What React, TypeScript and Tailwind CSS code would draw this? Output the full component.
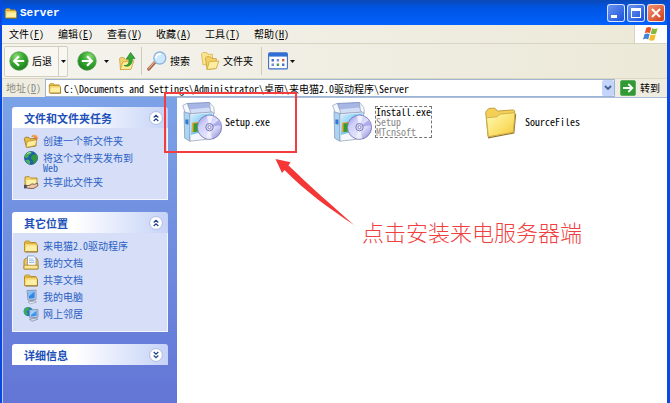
import type { ReactNode } from "react";

const menus = [
  { label: "文件", hotkey: "F" },
  { label: "编辑", hotkey: "E" },
  { label: "查看", hotkey: "V" },
  { label: "收藏", hotkey: "A" },
  { label: "工具", hotkey: "T" },
  { label: "帮助", hotkey: "H" },
];

function SmallFolder({ className = "size-4" }: { className?: string }) {
  return (
    <svg viewBox="0 0 16 16" className={className}>
      <path d="M1.5 4.5 2.6 3h3.8l1.2 1.5h5.2v2H1.5z" fill="#f2cf5a" stroke="#b48a24" strokeWidth=".9" />
      <path d="M1.5 13.6V5h11.4l1.2 1.2v7.4z" fill="#f5d468" stroke="#b48a24" strokeWidth=".9" />
      <path d="m2.4 12.8 1.2-5.4h10.8v5.8h-12z" fill="#fdf0a4" />
      <path d="M2.4 14h12V7.4" fill="none" stroke="#8d6a1c" strokeWidth=".9" />
    </svg>
  );
}

function NewFolder() {
  return (
    <svg viewBox="0 0 16 16" className="size-4">
      <path d="M1.2 5.5 3 4l3 .6 1 1.2 6-.4v7.6l-9.5 1.5z" fill="#e9bd43" stroke="#96701d" strokeWidth=".8" />
      <path d="m3.2 14.4 1-5.9 9.5-1.7-1.1 5.7z" fill="#fdee9c" stroke="#b98d2c" strokeWidth=".7" />
      <path d="M8.2 3.4c2-2.6 5.9-2 6.4.9.2 1.6-.3 2.8-1.4 3.7-.2-2.6-1.8-4.4-5-4.6z" fill="#e8782a" />
      <path d="M10 3.2c1.6-.9 3.3-.2 3.6 1.3" fill="none" stroke="#ffd277" strokeWidth="1" />
    </svg>
  );
}

function Globe() {
  return (
    <svg viewBox="0 0 16 16" className="size-4">
      <circle cx="8" cy="8" r="6.5" fill="#1f5dad" stroke="#1c4b88" strokeWidth=".7" />
      <path d="M2.4 4.5C4.5 1.6 7 1.4 9 1.8L8 4.2 5.8 5l-.5 2.4-2.6.7L1.5 7z" fill="#3fae49" />
      <path d="m8.5 5.8 3-1.5 2.6.7.3 3.4-2.2 4.5-1.6.8-.8-3.6-2-1.3z" fill="#2f9a3d" />
      <path d="m2.5 10 3-.4 2 2.4-.9 2.3A6.6 6.6 0 0 1 2.5 10z" fill="#47b952" />
      <path d="M4 4.3c1-1.4 2.4-1.8 3.5-1.7" fill="none" stroke="#d5f5e0" strokeWidth="1" />
    </svg>
  );
}

function ShareFolder() {
  return (
    <svg viewBox="0 0 16 16" className="size-4">
      <path d="M2 3 6 2.5 7.5 4H14v8H2z" fill="#f4d265" stroke="#a67a1d" strokeWidth=".8" />
      <path d="M3.4 6h9.8v5H3.4z" fill="#fdf0a8" />
      <path d="M3.2 11.5H6l3-1.6 2.5.4 3-1.1.4 2.6-4.1 2.6H5.8l-2.6-.8z" fill="#efc6a6" stroke="#5f4a36" strokeWidth=".8" />
      <path d="M1 10.8h2.6v3.6H1z" fill="#4b4f66" />
    </svg>
  );
}

function DocsFolder() {
  return (
    <svg viewBox="0 0 16 16" className="size-4">
      <path d="M1 5 3 3h10.5L15 6v8H1z" fill="#eec550" stroke="#a67a1d" strokeWidth=".8" />
      <path d="M4.500 1h6L13 3.400V11H4.500z" fill="#fff" stroke="#6f93c9" strokeWidth=".8" />
      <path d="M6 4h4.500M6 5.800h5.400M6 7.600h5.400" stroke="#79a8dd" strokeWidth=".8" />
      <path d="M1 10.200h14V14H1z" fill="#fbe892" stroke="#b0852a" strokeWidth=".8" />
    </svg>
  );
}

function Computer() {
  return (
    <svg viewBox="0 0 16 16" className="size-4">
      <path d="m4 1.500 9-.3v9.300l-8 .6z" fill="#d7deeb" stroke="#7484a5" strokeWidth=".8" />
      <path d="m5.200 2.700 6.500-.3v6.800l-5.800.5z" fill="#2f86e6" />
      <path d="m5.200 2.700 6.500-.3-6 5z" fill="#7fc1fa" />
      <path d="M7 11h4l.6 1.700H6.400z" fill="#8b99b4" />
      <path d="m5 13 6-1 2.500 1-6 1.800z" fill="#eef0f4" stroke="#8390a8" strokeWidth=".6" />
    </svg>
  );
}

function Network() {
  return (
    <svg viewBox="0 0 16 16" className="size-4">
      <circle cx="5.2" cy="5.600" r="4.600" fill="#2274c9" />
      <path d="M1.500 3.400C3 1.300 5 .9 6.800 1.400L5.300 4 3 5.500l1.500 2-.8 2.300A4.600 4.600 0 0 1 1.500 3.400z" fill="#3cb148" />
      <path d="m6.300 4 8.600-.4v7.600l-8 .8z" fill="#d7deeb" stroke="#7081a4" strokeWidth=".8" />
      <path d="m7.500 5 6.200-.3v5.400l-5.700.6z" fill="#3f94ec" />
      <path d="m7.500 5 6.200-.3-5.900 4.200z" fill="#9dd1fb" />
      <path d="m6.500 13.400 6-1.200 2.300 1-5.800 2z" fill="#e4e7ee" stroke="#74829e" strokeWidth=".7" />
    </svg>
  );
}

function ArrowBall({ flip = false, id }: { flip?: boolean; id: string }) {
  return (
    <svg viewBox="0 0 20 20" className={flip ? "size-5 -scale-x-100" : "size-5"}>
      <defs>
        <radialGradient id={id} cx=".35" cy=".25" r=".8">
          <stop offset="0" stopColor="#8ada73" />
          <stop offset=".5" stopColor="#37a932" />
          <stop offset="1" stopColor="#1b7d1c" />
        </radialGradient>
      </defs>
      <circle cx="10" cy="10" r="9.2" fill={`url(#${id})`} stroke="#4f9a4a" strokeWidth=".8" />
      <path d="M15.200 10H5.600M10 5.200 5.200 10l4.800 4.800" fill="none" stroke="#fff" strokeWidth="2.2" />
    </svg>
  );
}

function UpFolder() {
  return (
    <svg viewBox="0 0 18 20" className="h-5 w-[18px]">
      <path d="M1.500 7.500 3 6.300l3.300.6 1 1.600 6.200.8-1 8.700-10 .6z" fill="#f3d269" stroke="#c29c3c" strokeWidth=".7" />
      <path d="m2.300 18.600 2.600-7.800 11-1-3 8.600z" fill="#fdeb95" stroke="#c59b38" strokeWidth=".7" />
      <path d="M6 14.500c4 .4 5.300-2.200 5.200-6.500H8.300L12.600 1.500 17 7.600h-2.700c.2 5.600-3 9.200-8.300 6.900z" fill="#35a936" stroke="#1d7a22" strokeWidth=".7" />
    </svg>
  );
}

function Magnifier() {
  return (
    <svg viewBox="0 0 20 20" className="size-5">
      <path d="m1.800 18 6.400-7" stroke="#a0604a" strokeWidth="3.2" strokeLinecap="round" />
      <path d="m1.800 17.400 6-6.600" stroke="#e0a884" strokeWidth="1.3" strokeLinecap="round" />
      <circle cx="12.800" cy="7" r="6" fill="#cbe8fc" stroke="#8fb4de" strokeWidth="1.3" />
      <path d="M9 6.500c.3-2 2-3.600 4.400-3.500" fill="none" stroke="#fff" strokeWidth="1.800" strokeLinecap="round" />
    </svg>
  );
}

function Folders() {
  return (
    <svg viewBox="0 0 20 20" className="size-5">
      <path d="m1.500 3 1.400-1.600 4 .3 1 1.500 4.600.2v9.300L3 14z" fill="#fae48f" stroke="#d8b452" strokeWidth=".8" />
      <path d="m5.500 7 1.400-1.400 3.600.3 1.100 1.500 4.800.3-.6 9.800-8.800 1z" fill="#f3d062" stroke="#c99f3a" strokeWidth=".8" />
      <path d="m7 18.400 2.300-7.800 9.600-.6-2.600 7.500z" fill="#fdee9f" stroke="#cda33d" strokeWidth=".8" />
    </svg>
  );
}

function ViewsIcon() {
  return (
    <svg viewBox="0 0 20 18" className="h-[18px] w-5">
      <rect x=".6" y=".9" width="18.800" height="16" rx="1" fill="#fff" stroke="#3a6fc4" strokeWidth="1.1" />
      <path d="M1 1h18v3.600H1z" fill="#2f6fd6" />
      <path d="M3.500 7H6v2.400H3.500zM14 11.500h2.400V14H14z" fill="#4a6fd0" />
      <path d="M8.700 7h2.400v2.400H8.700zM3.500 11.500H6V14H3.500z" fill="#7f8bd0" />
      <path d="M14 7h2.400v2.400H14z" fill="#d0574a" />
      <path d="M8.700 11.500h2.400V14H8.700z" fill="#45a24f" />
    </svg>
  );
}

function WindowsFlag() {
  return (
    <svg viewBox="0 0 18 16" className="h-4 w-[18px]">
      <path d="M4.300 1.800C6 .8 7.700.8 9.300 1.800L7.900 7.200C6.200 6.300 4.600 6.400 2.800 7.300z" fill="#e9552b" />
      <path d="M10.200 2.200c1.700 1 3.400 1 5.400 0l-1.500 5.300c-1.800 1-3.600 1-5.300.1z" fill="#84b93a" />
      <path d="M2.500 8.300c1.800-1 3.500-1 5.100 0l-1.400 5.200C4.500 12.600 2.900 12.700 1 13.600z" fill="#4583d6" />
      <path d="M8.500 8.600c1.700 1 3.400 1 5.300 0l-1.500 5.300c-1.900 1-3.600 1-5.200 0z" fill="#f3bd28" />
    </svg>
  );
}

function InstallerIcon({ id }: { id: string }) {
  return (
    <svg viewBox="0 0 40 40" className="size-10 shrink-0">
      <defs>
        <linearGradient id={`${id}-box`} x1="0" y1="0" x2="1" y2="1">
          <stop offset="0" stopColor="#d9f1fd" />
          <stop offset=".5" stopColor="#7cc9f4" />
          <stop offset="1" stopColor="#4aa5e6" />
        </linearGradient>
        <linearGradient id={`${id}-disc`} x1="0" y1="0" x2="1" y2="1">
          <stop offset="0" stopColor="#8f90dd" />
          <stop offset=".3" stopColor="#cfcffa" />
          <stop offset=".6" stopColor="#e2e2fd" />
          <stop offset="1" stopColor="#8683cf" />
        </linearGradient>
      </defs>
      {/* box */}
      <path d="m2 9.500 6 2.300v27.400l-5.300-3z" fill="#a9d4f4" stroke="#8190ad" strokeWidth=".7" />
      <path d="M8 11.800 31.500 10v26.500L8 39.200z" fill="#f4f8fd" stroke="#8f9cb8" strokeWidth=".7" />
      <path d="m9 12.800 21.500-1.600V27L9 33z" fill={`url(#${id}-box)`} />
      <path d="M3.400 17.500h3v5.300l-3-1z" fill="#2f79d0" />
      <path d="m10 20.800 7.500-1V29l-7.500 1.500z" fill="#f0a03a" />
      <path d="m11.500 21.500 7-.7V29l-7 1.300z" fill="#2f9f2f" />
      {/* open lid */}
      <path d="M5.300 1.500 27.300.4l3.500 9L8 11.200z" fill="#a6b7e6" stroke="#6b7db0" strokeWidth=".7" />
      <path d="m7 7.500 20-2 3.500 3.900L8 11.200z" fill="#d3ddf6" />
      <path d="M.7 3.500 5.300 1.200 9 11.500l-6-1.300z" fill="#f4f7fc" stroke="#8f9cb8" strokeWidth=".7" />
      <path d="m27.300.4 4.500 5 .6 6.100-3.900-2.700z" fill="#fafbfd" stroke="#8f9cb8" strokeWidth=".7" />
      {/* disc */}
      <circle cx="27.500" cy="25.200" r="12.100" fill={`url(#${id}-disc)`} stroke="#6f6eb4" strokeWidth=".8" />
      <path d="m27.500 25.200-2.800-11.400a12 12 0 0 1 6.300.2z" fill="#fff" opacity=".65" />
      <path d="m27.500 25.200 2.800 11.400a12 12 0 0 1-6.300-.2z" fill="#fff" opacity=".6" />
      <path d="m27.500 25.200 9-7a12 12 0 0 1 2.300 5z" fill="#8a8ae0" opacity=".6" />
      <circle cx="27.500" cy="25.200" r="3.700" fill="#dcdcf6" stroke="#6f6db4" strokeWidth=".9" />
      <circle cx="27.500" cy="25.200" r="1.500" fill="#fff" stroke="#6d6bb0" strokeWidth=".8" />
    </svg>
  );
}

function BigFolder() {
  return (
    <svg viewBox="0 0 40 40" className="size-10 shrink-0">
      <defs>
        <linearGradient id="folder-front" x1="0" y1="0" x2="1" y2="1">
          <stop offset="0" stopColor="#fffab0" />
          <stop offset=".6" stopColor="#fbe06a" />
          <stop offset="1" stopColor="#f1c43a" />
        </linearGradient>
      </defs>
      <path d="M6 35.800 31.800 31 33.600 12" fill="none" stroke="#8f7430" strokeWidth="1.200" />
      <path
        d="M3.700 10.500Q3.800 9.300 6.400 6.800q.5-.6 6-.7 1.200 0 2.900 3l15.500-1.200q2 0 2 2.100L31.300 30.300 6 34.700z"
        fill="#f3cf55"
        stroke="#bd9a3c"
        strokeWidth=".9"
      />
      <path
        d="M4.600 17q-.2-1.200 1-1.300l9.200-.9 3.400-2.700 13.700-1.300q1.200 0 1 1.200l-1.600 18.300L6.400 34.700z"
        fill="url(#folder-front)"
        stroke="#caa544"
        strokeWidth=".8"
      />
    </svg>
  );
}

function Caret() {
  return (
    <svg viewBox="0 0 5 3" className="h-[3px] w-[5px]">
      <path d="M0 0h5L2.500 3z" fill="#111" />
    </svg>
  );
}

function PanelToggle({ open, title }: { open: boolean; title: string }) {
  return (
    <button aria-label={title} aria-expanded={open} className="size-[14px]">
      <svg viewBox="0 0 14 14" className={open ? "size-[14px]" : "size-[14px] rotate-180"}>
        <circle cx="7" cy="7" r="6.400" fill="#fff" stroke="#a3b1d8" strokeWidth=".8" />
        <path d="M4.700 6.500 7 4.300l2.300 2.200M4.700 10 7 7.800 9.300 10" fill="none" stroke="#1d3f8f" strokeWidth="1.200" />
      </svg>
    </button>
  );
}

function Panel({ title, open = true, children }: { title: string; open?: boolean; children?: ReactNode }) {
  return (
    <section>
      <header className="flex h-[21px] items-center justify-between rounded-t-[3px] bg-linear-to-r from-white from-40% to-[#c6d3f7] pr-[5px] pl-3">
        <h2 className="text-[11px] leading-4 font-bold text-[#1c50b8]">{title}</h2>
        <PanelToggle open={open} title={title} />
      </header>
      {open && (
        <ul className="flex flex-col gap-px border border-t-0 border-white/70 bg-[#d6dff7] px-[10px] pt-[5px] pb-[9px]">
          {children}
        </ul>
      )}
    </section>
  );
}

function TaskLink({ icon, children }: { icon: ReactNode; children: ReactNode }) {
  return (
    <li>
      <a href="#" className="flex items-start gap-1 text-[#2a60c4]">
        <span className="h-4 shrink-0">{icon}</span>
        <span className="pt-[3px] leading-[10px]">{children}</span>
      </a>
    </li>
  );
}

function TitleBar() {
  return (
    <header className="flex h-[25px] items-center gap-[2px] bg-linear-to-b from-[#0a49b5] via-[#0054e3] via-30% to-[#0162fc] px-[2px]">
      <SmallFolder className="size-[14px]" />
      <h1 className="flex-1 font-['Liberation_Mono',monospace] text-[11px] leading-4 font-bold text-white">Server</h1>
      <button aria-label="最小化" className="flex size-[18px] items-end rounded-[3px] border border-white/80 bg-linear-to-br from-[#6a94f0] to-[#1c4fd8] p-[3px]">
        <span className="h-[3px] w-[6px] bg-white" />
      </button>
      <button aria-label="最大化" className="flex size-[18px] items-center justify-center rounded-[3px] border border-white/80 bg-linear-to-br from-[#6a94f0] to-[#1c4fd8]">
        <span className="size-[10px] border border-t-[3px] border-white" />
      </button>
      <button aria-label="关闭" className="flex size-[18px] items-center justify-center rounded-[3px] border border-white/80 bg-linear-to-br from-[#f0926f] to-[#d03a14]">
        <svg viewBox="0 0 10 10" className="size-[10px]">
          <path d="m1 1 8 8M9 1 1 9" stroke="#fff" strokeWidth="1.900" />
        </svg>
      </button>
    </header>
  );
}

function Toolbar() {
  return (
    <div className="flex h-[34px] items-center bg-linear-to-r from-[#f4f3ee] to-[#ece9d8] pl-[2px]">
      <div className="flex h-[31px] rounded-[2px] border border-[#d3cfbe] bg-[#f8f7f2]">
        <button className="flex items-center gap-[3px] pr-[6px] pl-1">
          <ArrowBall id="ball-back" />
          后退
        </button>
        <button aria-label="后退历史" className="flex w-[9px] items-center justify-center border-l border-[#d3cfbe]">
          <Caret />
        </button>
      </div>
      <button aria-label="前进" className="ml-[9px]">
        <ArrowBall id="ball-forward" flip />
      </button>
      <button aria-label="前进历史" className="ml-[7px]">
        <Caret />
      </button>
      <button aria-label="向上" className="ml-[9px]">
        <UpFolder />
      </button>
      <span className="ml-[5px] h-7 w-px bg-[#d0ccba]" />
      <button className="ml-[5px] flex items-center gap-[3px]">
        <Magnifier />
        搜索
      </button>
      <button className="ml-[10px] flex items-center gap-[3px]">
        <Folders />
        文件夹
      </button>
      <span className="ml-2 h-7 w-px bg-[#d0ccba]" />
      <button aria-label="查看方式" className="ml-[6px] flex items-center gap-[2px]">
        <ViewsIcon />
        <Caret />
      </button>
    </div>
  );
}

function AddressBar() {
  return (
    <form className="flex h-[19px] items-center border-t border-[#dcd8c6] bg-[#efede2] pr-[7px] pl-1">
      <label htmlFor="address" className="w-[39px] text-[#8d8b80]">
        地址(<u>D</u>)
      </label>
      <div className="flex h-[18px] flex-1 items-center gap-[2px] border border-[#9fb4ce] bg-white pl-[2px]">
        <SmallFolder className="size-[14px]" />
        <input
          id="address"
          className="h-4 min-w-0 flex-1 outline-none"
          defaultValue="C:\Documents and Settings\Administrator\桌面\来电猫2.0驱动程序\Server"
        />
        <button type="button" aria-label="地址列表" className="flex h-4 w-3 items-center justify-center rounded-[2px] bg-[#c4d4fb]">
          <svg viewBox="0 0 8 6" className="h-[6px] w-2">
            <path d="m1 1 3 3 3-3" fill="none" stroke="#44608f" strokeWidth="1.800" />
          </svg>
        </button>
      </div>
      <button type="button" className="ml-[5px] flex items-center gap-1">
        <svg viewBox="0 0 16 16" className="size-4">
          <rect x=".5" y=".5" width="15" height="15" rx="1.500" fill="#319a35" stroke="#5eae5e" />
          <path d="M3 8h9M8.300 4l4 4-4 4" fill="none" stroke="#fff" strokeWidth="1.800" />
        </svg>
        转到
      </button>
    </form>
  );
}

function Annotation() {
  return (
    <>
      <div className="pointer-events-none absolute top-[92px] left-[162px] h-[61px] w-[133px] border-2 border-[#f23c3e]" />
      <svg viewBox="0 0 80 68" className="pointer-events-none absolute top-[158px] left-[273px] h-[68px] w-20">
        <path d="m.5 1 15 3.300-2 3.200C36 29 55 46 79 67 54 50 31 34 9.500 12l-2.500 3z" fill="#f53636" />
      </svg>
      <p className="pointer-events-none absolute top-[216px] left-[360px] font-['Noto_Sans_CJK_SC',sans-serif] text-[22px] leading-[30px] font-light whitespace-nowrap text-[#f04040]">
        点击安装来电服务器端
      </p>
    </>
  );
}

export default function App() {
  return (
    <div className="relative flex min-h-screen flex-col border-r-[3px] border-l-2 border-[#0a49e0] bg-white font-['Noto_Sans_Mono_CJK_SC','Noto_Sans_CJK_SC',sans-serif] text-[10px] leading-[14px] text-black">
      <TitleBar />
      <nav className="flex h-[19px] items-stretch border-b border-[#d8d4c2] bg-linear-to-r from-[#f4f3ee] to-[#ece9d8] pl-[7px]">
        <div className="flex flex-1 gap-[14px]">
          {menus.map((menu) => (
            <button key={menu.hotkey}>
              {menu.label}(<u>{menu.hotkey}</u>)
            </button>
          ))}
        </div>
        <div className="flex w-[33px] items-center justify-center border-l border-[#d8d4c2] bg-white">
          <WindowsFlag />
        </div>
      </nav>
      <Toolbar />
      <AddressBar />

      <div className="flex flex-1">
        <aside className="flex w-[175px] shrink-0 flex-col gap-3 border-l border-[#b9c9f2] bg-linear-to-b from-[#7ba2e7] to-[#6375d6] pt-[10px] pr-[9px] pl-[9px]">
          <Panel title="文件和文件夹任务">
            <TaskLink icon={<NewFolder />}>创建一个新文件夹</TaskLink>
            <TaskLink icon={<Globe />}>
              将这个文件夹发布到
              <br />
              Web
            </TaskLink>
            <TaskLink icon={<ShareFolder />}>共享此文件夹</TaskLink>
          </Panel>
          <Panel title="其它位置">
            <TaskLink icon={<SmallFolder />}>来电猫2.0驱动程序</TaskLink>
            <TaskLink icon={<DocsFolder />}>我的文档</TaskLink>
            <TaskLink icon={<SmallFolder />}>共享文档</TaskLink>
            <TaskLink icon={<Computer />}>我的电脑</TaskLink>
            <TaskLink icon={<Network />}>网上邻居</TaskLink>
          </Panel>
          <Panel title="详细信息" open={false} />
        </aside>

        <main className="flex-1 border-t border-[#a9bfdd] pt-1 pl-[5px]">
          <ul className="grid grid-cols-[repeat(auto-fill,150px)] leading-[10px]">
            <li className="flex items-center gap-[3px]">
              <InstallerIcon id="setup" />
              <span>Setup.exe</span>
            </li>
            <li className="flex items-center gap-[3px]">
              <InstallerIcon id="install" />
              <div className="border border-dashed border-[#777]">
                <p>Install.exe</p>
                <p className="text-[#8a8a8a]">Setup</p>
                <p className="text-[#8a8a8a]">MTcnsoft</p>
              </div>
            </li>
            <li className="flex items-center gap-[3px]">
              <BigFolder />
              <span>SourceFiles</span>
            </li>
          </ul>
        </main>
      </div>
      <Annotation />
    </div>
  );
}
